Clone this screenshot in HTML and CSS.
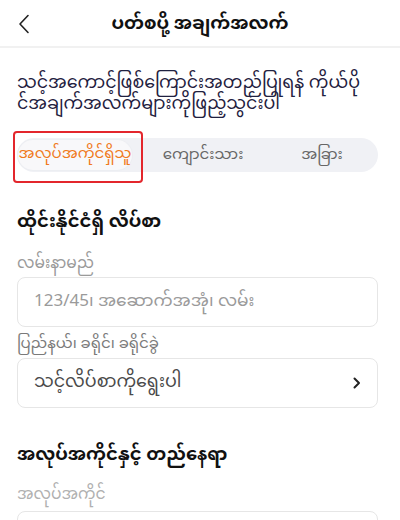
FILE: index.html
```html
<!DOCTYPE html>
<html lang="my">
<head>
<meta charset="utf-8">
<link rel="stylesheet" href="styles.css">
</head>
<body>
<header class="topbar">
  <span class="back">
    <svg width="12" height="20" viewBox="0 0 12 20"><path d="M10 1.5 L2 10 L10 18.5" fill="none" stroke="#222" stroke-width="1.6" stroke-linecap="round" stroke-linejoin="round"/></svg>
  </span>
  <h1 class="title">ပတ်စပို့ အချက်အလက်</h1>
  <span></span>
</header>
<main class="content">
  <p class="intro">သင့်အကောင့်ဖြစ်ကြောင်းအတည်ပြုရန် ကိုယ်ပို<br>င်အချက်အလက်များကိုဖြည့်သွင်းပါ</p>
  <div class="tabs-wrap">
    <div class="tabs">
      <div class="tab active">အလုပ်အကိုင်ရှိသူ</div>
      <div class="tab t2">ကျောင်းသား</div>
      <div class="tab t3">အခြား</div>
    </div>
    <div class="highlight"></div>
  </div>
  <h2 class="section">ထိုင်းနိုင်ငံရှိ လိပ်စာ</h2>
  <div class="label l1">လမ်းနာမည်</div>
  <div class="field"><span class="ph">123/45၊ အဆောက်အအုံ၊ လမ်း</span></div>
  <div class="label l2">ပြည်နယ်၊ ခရိုင်၊ ခရိုင်ခွဲ</div>
  <div class="field select"><span class="ph dark">သင့်လိပ်စာကိုရွေးပါ</span>
    <svg width="8" height="12" viewBox="0 0 8 12"><path d="M1.5 1.5 L6 6 L1.5 10.5" fill="none" stroke="#222" stroke-width="2" stroke-linecap="round" stroke-linejoin="round"/></svg>
  </div>
  <h2 class="section s2">အလုပ်အကိုင်နှင့် တည်နေရာ</h2>
  <div class="label l3">အလုပ်အကိုင်</div>
  <div class="field last"></div>
</main>
</body>
</html>
```
FILE: styles.css
```css
* { box-sizing: border-box; }
html, body { margin: 0; padding: 0; background: #fff; }
body {
  width: 400px;
  height: 520px;
  overflow: hidden;
  font-family: "Noto Sans Myanmar", "Padauk", "Myanmar Text", "Noto Sans", "DejaVu Sans", sans-serif;
  color: #1f2140;
}
.topbar {
  height: 48px;
  display: grid;
  grid-template-columns: 48px 1fr 48px;
  align-items: center;
  border-bottom: 2px solid #f1f1f1;
}
.back { display: flex; padding-left: 18px; padding-top: 2px; }
.title {
  margin: 0;
  text-align: center;
  font-size: 18px;
  font-weight: 700;
  color: #111;
  padding-top: 2px;
}
.content { padding: 0 22px 0 17px; }
.intro {
  margin: 26px 0 0;
  font-size: 17.5px;
  line-height: 21px;
  color: #1f2140;
  white-space: nowrap;
}
.tabs-wrap { position: relative; margin-top: 22px; }
.tabs {
  height: 34px;
  border-radius: 17px;
  background: #f0f1f5;
  display: flex;
  align-items: center;
  padding: 0 1px;
}
.tab {
  text-align: center;
  font-size: 15px;
  color: #666;
}
.tab.t2 { flex: 0 0 142px; }
.tab.t3 { flex: 0 0 96px; }
.tab.active {
  flex: 0 0 114px;
  height: 30px;
  line-height: 30px;
  border-radius: 15px;
  background: #f8f8fa;
  color: #f07a1c;
  box-shadow: 0 0 0 1px #eceef2;
}
.highlight {
  position: absolute;
  left: -4px;
  top: -7px;
  width: 130px;
  height: 52px;
  border: 2px solid #e3262c;
  border-radius: 4px;
}
.section {
  margin: 39px 0 0;
  font-size: 18px;
  font-weight: 700;
  color: #111;
  line-height: 24px;
}
.section.s2 { margin-top: 36px; }
.label {
  margin-top: 18px;
  font-size: 15.5px;
  line-height: 22px;
  color: #9a9a9a;
}
.label.l2 { margin-top: 7px; color: #7a7a7a; font-size: 15px; }
.label.l3 { margin-top: 16px; color: #b0b0b0; }
.field {
  margin-top: 2px;
  height: 50px;
  border: 1px solid #e6e6e6;
  border-radius: 8px;
  display: flex;
  align-items: center;
  justify-content: space-between;
  padding: 0 16px 0 16px;
}
.field.last { margin-top: 5px; }
.ph { font-size: 17px; color: #9a9a9a; }
.ph.dark { color: #4a4a4a; font-size: 17.5px; }
```
